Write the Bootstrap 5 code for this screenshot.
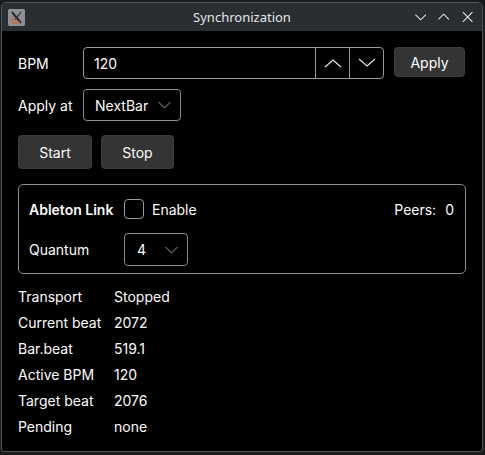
<!DOCTYPE html>
<html lang="en">
<head>
<meta charset="utf-8">
<title>Synchronization</title>
<link href="https://cdn.jsdelivr.net/npm/bootstrap@5.3.0/dist/css/bootstrap.min.css" rel="stylesheet">
<style>
html,body{height:100%;margin:0;background:#1a1b1c}
body{font-family:Inter,"Noto Sans",sans-serif;font-size:14px;color:#fcfcfc;line-height:17px;overflow:hidden}
.win{width:482px;height:450px;margin:2px 0 0 1px;border:1px solid #54575a;border-radius:5px 5px 3px 3px;background:#000;overflow:hidden;display:flex;flex-direction:column}
.tbar{height:28px;background:#2a2e32;flex:none;padding:0 8px 0 6px;font-family:"Noto Sans",sans-serif;font-size:13px;color:#e4e6e7}
.tbar-side{width:60px;flex:none}
.tbar-title{flex:1;text-align:center;padding-top:1px;padding-left:2px}
.appico{width:17px;height:17px;border-radius:2px;background:#8e9091;display:block}
.winbtns{gap:10px}
.winbtns svg{display:block;width:14px;height:14px}
.wbody{padding:16px 0 0 16px}
.lbl{width:65px;flex:none}
.spin{height:32px;width:301px;border:1px solid #999;border-radius:4px;flex:none}
.spin-val{flex:1;padding-left:10px;font-size:14px}
.spin-btn{width:34px;height:100%;border-left:1px solid #999}
.spin-btn svg{width:18px;height:10px;display:block}
.dbtn{background:#343434;border:1px solid #3d3d3d;border-radius:4px;color:#fcfcfc;font-size:14px;line-height:17px;padding:0}
.dbtn:hover{background:#343434;color:#fcfcfc}
.apply{width:71px;height:30px;margin-left:10px;margin-bottom:2px}
.combo{border:1px solid #8a8a8a;border-radius:4px;padding-left:11px;padding-right:9px}
.combo svg{width:13px;height:8px;display:block}
.combo-at{width:98px;height:32px;margin-top:10px}
.combo-q{width:64px;height:33px;padding-left:12px}
.tb{width:74px;height:34px}
.tb2{width:73px}
.tools{margin-top:14px;gap:9px}
.grp{margin-top:15px;width:448px;height:90px;border:1px solid #8a8a8a;border-radius:5px;padding:14px 11px 0 10px}
.chk{width:20px;height:20px;border:1px solid #999;border-radius:4px;flex:none}
.enbl{margin-left:8px}
.grp-l{width:95px;flex:none}
.grp-r2{margin-top:14px}
.peers{margin-left:auto;gap:9px}
.info{margin-top:14px;row-gap:9px;display:grid;grid-template-columns:96px auto;justify-content:start}
.atlbl{margin-top:10px}
</style>
</head>
<body>
<div class="win">
  <div class="tbar d-flex align-items-center">
    <div class="tbar-side">
      <svg class="appico" viewBox="0 0 17 17"><rect width="17" height="17" rx="2" fill="#8f9091"/><path d="M4 3l9 11" stroke="#2b2b2b" stroke-width="2" fill="none"/><path d="M13 3L7 11" stroke="#333" stroke-width="1.2" fill="none"/><path d="M6 8c-3 2-2 6 1 6s3-1 5-1" stroke="#d0643a" stroke-width="1.5" fill="none"/></svg>
    </div>
    <div class="tbar-title">Synchronization</div>
    <div class="tbar-side winbtns d-flex align-items-center justify-content-end">
      <svg viewBox="0 0 14 14"><path d="M1.5 4.5L7 10l5.5-5.5" stroke="#e4e6e7" stroke-width="1.1" fill="none"/></svg>
      <svg viewBox="0 0 14 14"><path d="M1.5 9.5L7 4l5.5 5.5" stroke="#e4e6e7" stroke-width="1.1" fill="none"/></svg>
      <svg viewBox="0 0 14 14"><path d="M2 2l10 10M12 2L2 12" stroke="#e4e6e7" stroke-width="1.1" fill="none"/></svg>
    </div>
  </div>
  <div class="wbody">
    <div class="d-flex align-items-center">
      <div class="lbl">BPM</div>
      <div class="spin d-flex align-items-center">
        <div class="spin-val">120</div>
        <div class="spin-btn d-flex align-items-center justify-content-center"><svg viewBox="0 0 18 10"><path d="M1 9l8-7 8 7" stroke="#e8e8e8" stroke-width="1.1" fill="none"/></svg></div>
        <div class="spin-btn d-flex align-items-center justify-content-center"><svg viewBox="0 0 18 10"><path d="M1 1l8 7 8-7" stroke="#e8e8e8" stroke-width="1.1" fill="none"/></svg></div>
      </div>
      <button class="btn dbtn apply" type="button">Apply</button>
    </div>
    <div class="d-flex align-items-center">
      <div class="lbl atlbl">Apply at</div>
      <div class="combo combo-at d-flex align-items-center justify-content-between"><span>NextBar</span><svg viewBox="0 0 13 8"><path d="M.5 1l6 6 6-6" stroke="#999" stroke-width="1" fill="none"/></svg></div>
    </div>
    <div class="tools d-flex">
      <button class="btn dbtn tb" type="button">Start</button>
      <button class="btn dbtn tb tb2" type="button">Stop</button>
    </div>
    <div class="grp">
      <div class="d-flex align-items-center">
        <div class="grp-l fw-semibold">Ableton Link</div>
        <div class="chk"></div>
        <div class="enbl">Enable</div>
        <div class="peers d-flex"><span>Peers:</span><span>0</span></div>
      </div>
      <div class="grp-r2 d-flex align-items-center">
        <div class="grp-l">Quantum</div>
        <div class="combo combo-q d-flex align-items-center justify-content-between"><span>4</span><svg viewBox="0 0 13 8"><path d="M.5 1l6 6 6-6" stroke="#999" stroke-width="1" fill="none"/></svg></div>
      </div>
    </div>
    <div class="info">
      <div>Transport</div><div>Stopped</div>
      <div>Current beat</div><div>2072</div>
      <div>Bar.beat</div><div>519.1</div>
      <div>Active BPM</div><div>120</div>
      <div>Target beat</div><div>2076</div>
      <div>Pending</div><div>none</div>
    </div>
  </div>
</div>
<script src="https://cdn.jsdelivr.net/npm/bootstrap@5.3.0/dist/js/bootstrap.bundle.min.js"></script>
</body>
</html>
